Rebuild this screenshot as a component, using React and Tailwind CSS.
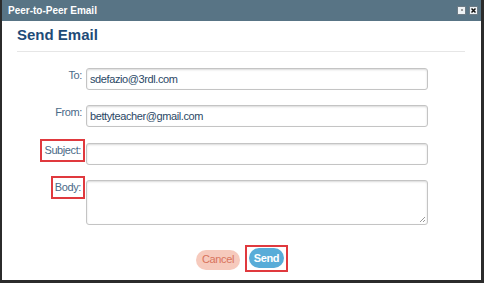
import React from "react";

function Field({ label, boxed, children }) {
  return (
    <div className="flex items-start">
      <div className={boxed ? "w-[84px] flex justify-end pr-[1px]" : "w-[84px] flex justify-end pr-[4px]"}>
        {boxed ? (
          <span className="-mt-[4px] border-2 border-[#e0393e] px-[2px] pt-[3px] pb-[3px] leading-[13px] text-[#4a6a88]">
            {label}
          </span>
        ) : (
          <span className="pt-[1px] leading-[13px] text-[#4a6a88]">{label}</span>
        )}
      </div>
      {children}
    </div>
  );
}

function Input({ value }) {
  return (
    <div className="w-[342px] h-[22px] border border-[#c4c4c4] rounded-[3px] shadow-[inset_0_1px_2px_rgba(0,0,0,0.15)] px-[3px] flex items-center text-[#2b4866]">
      {value}
    </div>
  );
}

function App() {
  return (
    <div className="w-[484px] h-[283px] bg-[#2b2b2b] pl-[2px] pr-[3px] pb-[3px] font-['Liberation_Sans',Arial,sans-serif] text-[11px] tracking-[-0.4px]">
      <div className="h-full flex flex-col bg-white">
        <div className="h-[21px] bg-[#587485] flex items-center justify-between pl-[6px] pr-[3px] tracking-normal">
          <span className="text-white font-bold text-[10px]">Peer-to-Peer Email</span>
          <div className="flex gap-[3px] -mt-[1px]">
            <div className="w-[9px] h-[9px] bg-[#eef2f5] border border-[#6d7b85] flex items-center justify-center">
              <div className="w-[2px] h-[2px] bg-[#999]" />
            </div>
            <div className="w-[9px] h-[9px] bg-[#eef2f5] border border-[#6d7b85] flex items-center justify-center">
              <svg width="7" height="7" viewBox="0 0 7 7">
                <path d="M1.5 1.5 L5.5 5.5 M5.5 1.5 L1.5 5.5" stroke="#111" strokeWidth="1.5" />
              </svg>
            </div>
          </div>
        </div>
        <div className="pl-[15px] pr-[16px] tracking-normal">
          <h1 className="text-[15px] font-bold text-[#1e4b78] mt-[5px] leading-[18px]">Send Email</h1>
          <div className="h-px bg-[#e6e6e6] mt-[7px]" />
        </div>
        <div className="flex flex-col mt-[16px]">
          <Field label="To:">
            <Input value="sdefazio@3rdl.com" />
          </Field>
          <div className="mt-[15px]">
            <Field label="From:">
              <Input value="bettyteacher@gmail.com" />
            </Field>
          </div>
          <div className="mt-[16px]">
            <Field label="Subject:" boxed>
              <Input value="" />
            </Field>
          </div>
          <div className="mt-[15px]">
            <Field label="Body:" boxed>
              <div className="relative w-[342px] h-[45px] border border-[#c4c4c4] rounded-[3px] shadow-[inset_0_1px_2px_rgba(0,0,0,0.15)]">
                <svg className="absolute right-[1px] bottom-[1px]" width="7" height="7" viewBox="0 0 7 7">
                  <path d="M6 1 L1 6 M6 4 L4 6" stroke="#999" strokeWidth="1" />
                </svg>
              </div>
            </Field>
          </div>
        </div>
        <div className="flex items-center mt-[20px] pl-[194px]">
          <button className="h-[20px] w-[44px] rounded-full bg-[#f6cabd] text-[#d8735c] text-[11px] mt-[2px]">Cancel</button>
          <div className="ml-[5px] border-2 border-[#e0393e] px-[2px] pt-[1px] pb-[2px]">
            <button className="h-[20px] w-[35px] rounded-full bg-[#58acd8] text-white font-bold text-[11px]">Send</button>
          </div>
        </div>
      </div>
    </div>
  );
}

export default App;
